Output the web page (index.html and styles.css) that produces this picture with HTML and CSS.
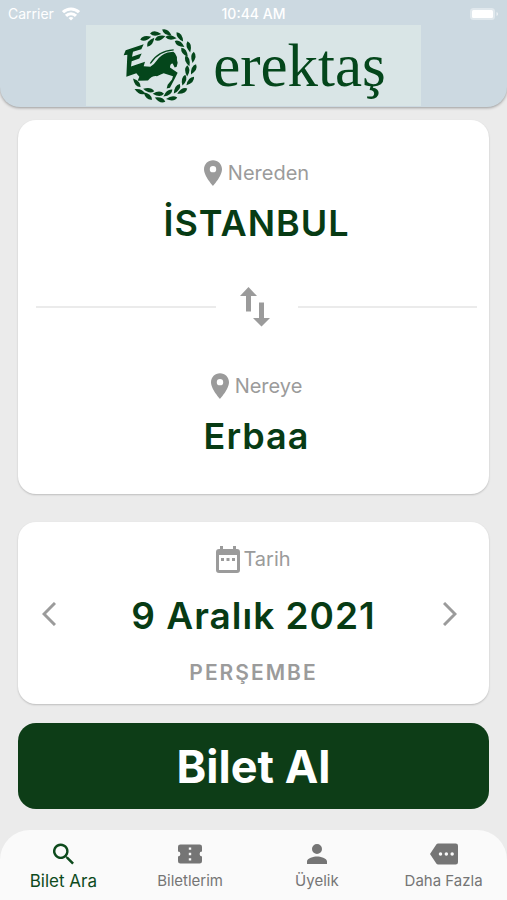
FILE: index.html
```html
<!DOCTYPE html>
<html lang="tr">
<head>
  <meta charset="UTF-8" />
  <meta name="viewport" content="width=device-width, initial-scale=1.0"/>
  <title>Erektaş</title>
  <link rel="stylesheet" href="styles.css">
</head>
<body>
  <!-- Header -->
  <header class="header">
    <div class="status">
      <div class="carrier">
        <span>Carrier</span>
        <svg width="18" height="14" viewBox="0 0 18 14" fill="none" stroke="#fff" stroke-width="3">
          <path class="waves" d="M1 5.2a11.5 11.5 0 0 1 16 0M4 8.900a7 7 0 0 1 10 0"/>
          <path d="M9 13.5L6.500 11a3.800 3.800 0 0 1 5 0z" fill="#fff" stroke="none"/>
        </svg>
      </div>
      <div class="time">10:44 AM</div>
      <div class="battery">
        <svg width="30" height="14" viewBox="0 0 30 14">
          <rect x="1" y="1" width="25" height="12" rx="3.5" fill="#fff" opacity=".4"/>
          <rect x="3" y="3" width="21" height="8" rx="1.5" fill="#fff"/>
          <path d="M27.5 5v4q1.6-.6 1.6-2t-1.6-2z" fill="#fff" opacity=".6"/>
        </svg>
      </div>
    </div>
    <div class="brand">
      <svg class="emblem" viewBox="30 15 240 230">
        <defs>
          <path id="leaf" d="M-17 1Q-6-13 17 0Q-4 13-17 1z"/>
        </defs>
        <!-- Wreath -->
        <use href="#leaf" transform="translate(104 48) rotate(-14)"/>
        <use href="#leaf" transform="translate(119 60) rotate(-50)"/>
        <use href="#leaf" transform="translate(134 34) rotate(4)"/>
        <use href="#leaf" transform="translate(147 47) rotate(-20)"/>
        <use href="#leaf" transform="translate(168 31) rotate(34)"/>
        <use href="#leaf" transform="translate(180 46) rotate(8)"/>
        <use href="#leaf" transform="translate(207 44) rotate(56)"/>
        <use href="#leaf" transform="translate(206 65) rotate(34)"/>
        <use href="#leaf" transform="translate(234 74) rotate(78)"/>
        <use href="#leaf" transform="translate(221 90) rotate(56)"/>
        <use href="#leaf" transform="translate(247 106) rotate(98)"/>
        <use href="#leaf" transform="translate(230 116) rotate(72)"/>
        <use href="#leaf" transform="translate(248 142) rotate(118)"/>
        <use href="#leaf" transform="translate(229 146) rotate(92)"/>
        <use href="#leaf" transform="translate(238 177) rotate(134)"/>
        <use href="#leaf" transform="translate(219 174) rotate(106)"/>
        <use href="#leaf" transform="translate(214 207) rotate(154)"/>
        <use href="#leaf" transform="translate(198 200) rotate(124)"/>
        <use href="#leaf" transform="translate(182 229) rotate(174)"/>
        <use href="#leaf" transform="translate(171 213) rotate(144)"/>
        <use href="#leaf" transform="translate(147 233) rotate(204)"/>
        <use href="#leaf" transform="translate(142 215) rotate(182)"/>
        <use href="#leaf" transform="translate(110 222) rotate(222)"/>
        <use href="#leaf" transform="translate(113 204) rotate(194)"/>
        <use href="#leaf" transform="translate(86 208) rotate(206)"/>
        <use href="#leaf" transform="translate(77 182) rotate(230)"/>
        <!-- Horse -->
        <path d="M38 99L44 84L98 66L91 81L66 89L63 104L92 94L85 109L62 117L60 133L102 119L98 132L118 134Q130 126 138 114Q150 98 170 91L187 89L192 93Q199 102 198 114L200 122L197 134L191 136L185 124Q177 124 177 136L200 152L193 166L177 197L167 199L170 188L183 172L186 162L158 153Q150 156 138 162Q123 160 111 175L80 176L85 164L76 153L46 164L49 98z"/>
        <path class="mane" d="M118 124Q141 86 188 83"/>
      </svg>
      <span class="wordmark">erektaş</span>
    </div>
  </header>

  <main class="content">
    <!-- Route -->
    <section class="card route">
      <div class="stop">
        <div class="label">
          <svg class="pin" viewBox="5 2 14 20"><path d="M12 2C8.1 2 5 5.1 5 9c0 5.3 7 13 7 13s7-7.700 7-13c0-3.900-3.100-7-7-7zm0 9.500a2.500 2.500 0 1 1 0-5 2.500 2.500 0 0 1 0 5z"/></svg>
          <span>Nereden</span>
        </div>
        <div class="value">İSTANBUL</div>
      </div>
      <div class="swap-row">
        <hr>
        <button class="swap" aria-label="Değiştir">
          <svg width="30" height="40" viewBox="0 0 30 40"><path d="M8.500 0L17 9h-6v15.500H6V9H0zM19 15.500h5V31h6l-8.500 8.500L13 31h6z"/></svg>
        </button>
        <hr>
      </div>
      <div class="stop">
        <div class="label">
          <svg class="pin" viewBox="5 2 14 20"><path d="M12 2C8.1 2 5 5.1 5 9c0 5.3 7 13 7 13s7-7.700 7-13c0-3.900-3.100-7-7-7zm0 9.500a2.500 2.500 0 1 1 0-5 2.500 2.500 0 0 1 0 5z"/></svg>
          <span>Nereye</span>
        </div>
        <div class="value">Erbaa</div>
      </div>
    </section>

    <!-- Date -->
    <section class="card date">
      <div class="label tight">
        <svg width="24" height="27" viewBox="0 0 24 27">
          <path fill-rule="evenodd" d="M4 0h3v3h10V0h3v3h1q3 0 3 3v18q0 3-3 3H3q-3 0-3-3V6q0-3 3-3h1zM3 9v15h18V9z"/>
          <path d="M5 12h3v3H5zM10.500 12h3v3h-3zM16 12h3v3h-3z"/>
        </svg>
        <span>Tarih</span>
      </div>
      <div class="date-row">
        <button class="arrow" aria-label="Önceki gün">
          <svg width="14" height="24" viewBox="0 0 14 24"><path d="M13 1L2 12l11 11"/></svg>
        </button>
        <div class="value">9 Aralık 2021</div>
        <button class="arrow next" aria-label="Sonraki gün">
          <svg width="14" height="24" viewBox="0 0 14 24"><path d="M1 1l11 11L1 23"/></svg>
        </button>
      </div>
      <div class="day">PERŞEMBE</div>
    </section>

    <button class="buy">Bilet Al</button>
  </main>

  <!-- Bottom menu -->
  <nav class="tabs">
    <a href="#" class="tab active">
      <svg width="21" height="21" viewBox="3 3 17.500 17.500"><path d="M15.500 14h-.8l-.3-.3A6.500 6.500 0 1 0 13.700 14.400l.3.300v.8l5 5 1.500-1.500zm-6 0a4.500 4.500 0 1 1 0-9 4.500 4.500 0 0 1 0 9z"/></svg>
      <span>Bilet Ara</span>
    </a>
    <a href="#" class="tab">
      <svg width="24" height="20" viewBox="2 4 20 16"><path fill-rule="evenodd" d="M20 12a2 2 0 0 1 2-2V6a2 2 0 0 0-2-2H4a2 2 0 0 0-2 2v4a2 2 0 0 1 0 4v4a2 2 0 0 0 2 2h16a2 2 0 0 0 2-2v-4a2 2 0 0 1-2-2zM11 6.500h2v2h-2zM11 11h2v2h-2zM11 15.500h2v2h-2z"/></svg>
      <span>Biletlerim</span>
    </a>
    <a href="#" class="tab">
      <svg width="20" height="20" viewBox="4 4 16 16"><path d="M12 12a4 4 0 1 0 0-8 4 4 0 0 0 0 8zm0 2c-2.700 0-8 1.300-8 4v2h16v-2c0-2.700-5.300-4-8-4z"/></svg>
      <span>Üyelik</span>
    </a>
    <a href="#" class="tab">
      <svg width="28" height="22" viewBox="0 3 24 18"><path fill-rule="evenodd" d="M22 3H7c-.7 0-1.200.3-1.600.9L0 12l5.400 8.100c.4.500.9.900 1.600.9h15a2 2 0 0 0 2-2V5a2 2 0 0 0-2-2zM9 13.500a1.500 1.500 0 1 1 0-3 1.500 1.500 0 0 1 0 3zm5 0a1.500 1.500 0 1 1 0-3 1.500 1.500 0 0 1 0 3zm5 0a1.500 1.500 0 1 1 0-3 1.500 1.500 0 0 1 0 3z"/></svg>
      <span>Daha Fazla</span>
    </a>
  </nav>
</body>
</html>
```
FILE: styles.css
```css
* {
  box-sizing: border-box;
}

body {
  margin: 0;
  min-height: 100vh;
  display: flex;
  flex-direction: column;
  background: #ebebeb;
  font-family: Inter, "Liberation Sans", sans-serif;
  color: #9b9b9b;
}

button {
  border: 0;
  padding: 0;
  background: none;
  font-family: inherit;
  cursor: pointer;
}

svg {
  display: block;
  fill: currentColor;
}

.header {
  background: #ccd9e1;
  border-radius: 0 0 20px 20px;
  box-shadow: 0 1px 3px rgba(0, 0, 0, 0.35);
  padding-bottom: 1px;
}

.status {
  display: grid;
  grid-template-columns: 1fr auto 1fr;
  align-items: center;
  height: 25px;
  padding: 2px 8px 0;
  font-size: 14px;
  color: #fff;
}

.carrier {
  display: flex;
  align-items: center;
  gap: 8px;
}

.waves {
  fill: none;
}

.time {
  font-weight: 500;
}

.battery {
  justify-self: end;
}

.brand {
  display: flex;
  align-items: center;
  justify-content: center;
  gap: 12px;
  width: 66%;
  height: 81px;
  margin: 0 auto;
  background: #d9e5e6;
}

.emblem {
  width: 80px;
  height: 77px;
  fill: #04461b;
}

.mane {
  fill: none;
  stroke: #04461b;
  stroke-width: 4;
}

.wordmark {
  font-family: "Liberation Serif", serif;
  font-size: 61px;
  line-height: 80px;
  color: #04461b;
}

.content {
  flex: 1;
  display: flex;
  flex-direction: column;
  padding: 13px 18px 20px;
}

.card {
  background: #fff;
  border-radius: 18px;
  box-shadow: 0 1px 2px rgba(0, 0, 0, 0.2);
}

.route {
  padding: 39px 12px 36px 18px;
  margin-bottom: 28px;
}

.label {
  display: flex;
  align-items: center;
  justify-content: center;
  gap: 6px;
  height: 28px;
  font-size: 20px;
}

.tight {
  gap: 3px;
}

.pin {
  width: 18px;
  height: 26px;
}

.value {
  font-size: 36px;
  font-weight: 600;
  line-height: 44px;
  letter-spacing: 1px;
  text-align: center;
  color: #073b14;
}

.stop .value {
  margin-top: 14px;
}

.swap-row {
  display: flex;
  align-items: center;
  gap: 24px;
  height: 40px;
  margin: 42px 0 45px;
}

.swap-row hr {
  flex: 1;
  margin: 0;
  border: 0;
  border-top: 2px solid #ebebeb;
}

.swap,
.arrow {
  color: #9b9b9b;
}

.swap {
  width: 34px;
}

.date {
  padding: 23px 24px 18px;
  margin-bottom: 19px;
}

.date-row {
  display: grid;
  grid-template-columns: 1fr auto 1fr;
  margin: 21px 0 22px;
}

.date-row .value {
  font-size: 37px;
}

.arrow {
  height: 40px;
  justify-self: start;
}

.arrow svg {
  fill: none;
  stroke: currentColor;
  stroke-width: 3;
}

.next {
  justify-self: end;
  margin-right: 8px;
}

.day {
  font-size: 21px;
  font-weight: 600;
  line-height: 26px;
  letter-spacing: 2px;
  text-align: center;
}

.buy {
  height: 86px;
  border-radius: 18px;
  background: #0d3d17;
  color: #fff;
  font-size: 45px;
  font-weight: 700;
}

.tabs {
  display: grid;
  grid-template-columns: repeat(4, 1fr);
  height: 70px;
  padding-top: 13px;
  border-radius: 30px 30px 0 0;
  background: #fafafa;
}

.tab {
  display: flex;
  flex-direction: column;
  align-items: center;
  gap: 4px;
  font-size: 15px;
  line-height: 24px;
  color: #757575;
  text-decoration: none;
}

.tab svg {
  height: 22px;
}

.active {
  font-size: 17px;
  color: #0d4a1c;
}
```
